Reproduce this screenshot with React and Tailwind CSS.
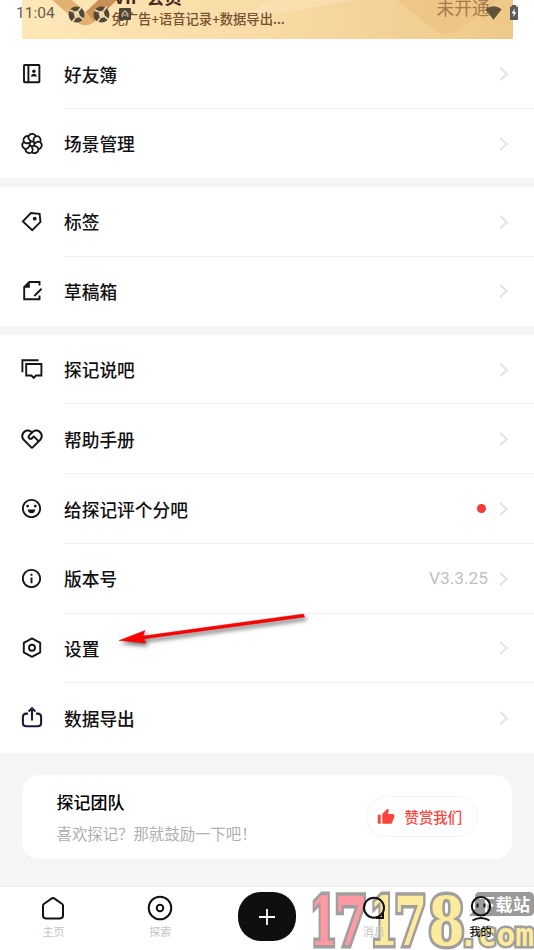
import React from 'react';
import { RiServiceLine, RiEmotionLine, RiInformationLine, RiThumbUpFill } from 'react-icons/ri';

function Icon({ children, color = '#161616' }) {
  return (
    <svg width="24" height="24" viewBox="0 0 24 24" fill="none" stroke={color} strokeWidth="1.9" className="shrink-0">
      {children}
    </svg>
  );
}

const petals = [0, 51.4, 102.9, 154.3, 205.7, 257.1, 308.6];

const icons = {
  book: (
    <Icon>
      <rect x="4" y="3" width="15.4" height="17.2" rx="0.6" />
      <path d="M8.4 3v17" />
      <circle cx="13.9" cy="9.2" r="1.7" fill="#161616" stroke="none" />
      <path d="M11 14.5c0-3.7 5.8-3.7 5.8 0z" fill="#161616" stroke="none" />
    </Icon>
  ),
  flower: (
    <Icon>
      <circle cx="12" cy="11.8" r="2.3" strokeWidth="1.5" />
      {petals.map((deg) => (
        <path
          key={deg}
          d="M12 9.5C9.2 8.5 7.8 6 8.7 3.9C10.2 1 14.8 1.3 15.8 4.6"
          strokeWidth="1.8"
          transform={`rotate(${deg} 12 11.8)`}
        />
      ))}
    </Icon>
  ),
  tag: (
    <Icon>
      <path d="M2.9 11.4 10.9 3 19.6 3.9 20.5 11.8 12.2 20.2z" />
      <circle cx="14.7" cy="8.7" r="1.9" fill="#161616" stroke="none" />
    </Icon>
  ),
  draft: (
    <Icon>
      <path d="M19.5 6.5V3H9.3L4.2 8.2V20.2H19.5V16.6" />
      <path d="M9.8 3V8.8H4.2z" fill="#161616" stroke="none" />
      <path d="M14.3 17 21.6 9.8" />
    </Icon>
  ),
  chat: (
    <Icon>
      <path d="M18.6 2.3H2.4V14.2" />
      <path d="M6.2 6H21.4V17.5H16L13.7 19.9 11.4 17.5H6.2z" />
    </Icon>
  ),
  heart: <RiServiceLine size={24} color="#161616" className="-mt-px shrink-0" />,
  smile: <RiEmotionLine size={23} color="#161616" className="mr-px shrink-0" />,
  info: <RiInformationLine size={23} color="#161616" className="mr-px shrink-0" />,
  settings: (
    <Icon>
      <path d="M12 2.4 20.2 6.9V16.3L12 20.9 3.8 16.3V6.9z" strokeLinejoin="round" />
      <circle cx="12" cy="11.7" r="3" />
    </Icon>
  ),
  share: (
    <Icon color="#25173a">
      <path strokeWidth="2.1" d="M8 7.6H6.2Q2.9 7.6 2.9 10.9V17Q2.9 20.3 6.2 20.3H17.8Q21.1 20.3 21.1 17V10.9Q21.1 7.6 17.8 7.6H16" />
      <path strokeWidth="2.1" d="M12 14.6V3.5M8.6 5.4 12 2.2 15.4 5.4" />
    </Icon>
  ),
};

const groups = [
  [
    { icon: 'book', label: '好友簿' },
    { icon: 'flower', label: '场景管理' },
  ],
  [
    { icon: 'tag', label: '标签' },
    { icon: 'draft', label: '草稿箱' },
  ],
  [
    { icon: 'chat', label: '探记说吧' },
    { icon: 'heart', label: '帮助手册' },
    { icon: 'smile', label: '给探记评个分吧', dot: true },
    { icon: 'info', label: '版本号', value: 'V3.3.25' },
    { icon: 'settings', label: '设置' },
    { icon: 'share', label: '数据导出' },
  ],
];

function Row({ item, last }) {
  return (
    <div className="flex h-[69.7px] items-center pl-5">
      {icons[item.icon]}
      <div className={`ml-5 flex h-full flex-1 items-center border-b pt-px pr-[25px] ${last ? 'border-transparent' : 'border-[#f0f0f0]'}`}>
        <span className="flex-1 text-[17.7px] font-medium text-[#111]">{item.label}</span>
        {item.dot && <span className="mr-[13px] h-[9px] w-[9px] rounded-full bg-[#f53b37]" />}
        {item.value && (
          <span className="mr-[11px] pt-px font-[Roboto] text-[17.3px] text-[#c0c0c0]">{item.value}</span>
        )}
        <svg width="10" height="14" viewBox="0 0 10 14" fill="none" stroke="#e2e2e2" strokeWidth="2">
          <path d="M1.2 1 7.8 7 1.2 13" />
        </svg>
      </div>
    </div>
  );
}

function Pinwheel() {
  return (
    <svg width="17" height="17" viewBox="0 0 17 17">
      <circle cx="8.5" cy="8.5" r="8" fill="#51483a" />
      <path d="M5.2 5.5 10.5 4.5 12.2 11 7 12.5z" fill="#edd6a6" />
      <path d="M5.4 5.7 1.5 4M10.5 5 13.5.8M11.8 10.8 15.5 13.5M7 12.2 4 16.5" fill="none" stroke="#edd6a6" strokeWidth="1.8" />
    </svg>
  );
}

function Header() {
  return (
    <header className="relative h-[39px] overflow-hidden px-[22px]">
      <div className="relative h-full w-[490.5px] overflow-hidden bg-linear-to-r from-[#ffe7b8] via-[#f8dba5] to-[#eec888]">
        <svg width="491" height="39" viewBox="22 0 491 39" fill="none" className="absolute inset-0">
          <path d="M232 22 355 0H270z" fill="#fff0cc" opacity=".3" />
          <path d="M117-9 91 16Q85 21 80 16" stroke="#c98f55" strokeWidth="13" />
          <path d="M53-8 80 16Q85 21 90 16.5" stroke="#e2b170" strokeWidth="13" />
          <path d="M397 0 434 30Q446 38 459 30L497 0z" fill="#ecc384" opacity=".8" />
        </svg>
        <div className="absolute left-[92px] top-[-16px] whitespace-nowrap text-[17.7px] leading-6 font-bold text-[#4c291c]">VIP 会员</div>
        <div className="absolute left-[89.5px] top-[9px] whitespace-nowrap text-[13.3px] leading-5 font-medium text-[#76502f]">免广告+语音记录+数据导出...</div>
        <div className="absolute left-[414.5px] top-[-5px] whitespace-nowrap text-[17.7px] leading-6 text-[#a57a4c]">未开通</div>
      </div>
      {/* system status bar floats over the banner */}
      <div className="absolute inset-x-0 top-0 flex h-7 items-center pl-4">
        <span className="w-[51.5px] font-[Roboto] text-[15.5px] text-[#625c50]">11:04</span>
        <Pinwheel />
        <span className="w-2" />
        <Pinwheel />
        <svg width="12" height="12" viewBox="0 0 12 12" className="ml-[9.5px]">
          <rect width="12" height="12" rx="1" fill="#4d4539" />
          <path d="M3.2 9V6L6 2.8 8.8 6V9M4 7h4" fill="none" stroke="#d8bd8d" strokeWidth="1.2" />
        </svg>
        <svg width="17" height="14" viewBox="0 0 17 14" className="mt-[-3px] ml-auto">
          <path d="M.3 3.2Q8.5-2.8 16.7 3.2L8.5 13.8z" fill="#625239" />
        </svg>
        <svg width="8" height="15" viewBox="0 0 8 15" className="mt-[-3px] mr-4 ml-[8.5px]">
          <path d="M2 0h4v1.5h2V15H0V1.5h2z" fill="#5b5b5b" />
          <path d="M4.8 3.5 1.6 8.2h2L3.2 12 6.4 7.3h-2z" fill="#fff" />
        </svg>
      </div>
    </header>
  );
}

function TabItem({ label, active, children }) {
  return (
    <div className="relative flex flex-1 flex-col items-center pt-2">
      <svg width="28" height="28" viewBox="0 0 28 28" fill="none" stroke="#111" strokeWidth="2">
        {children}
      </svg>
      <span className={`-mt-[1.5px] text-[11px] leading-[18px] ${active ? 'font-medium text-[#111]' : 'text-[#c4c4c4]'}`}>{label}</span>
    </div>
  );
}

const digits = [
  { char: '1', x: 310, width: 27, color: '#ff9aa5' },
  { char: '7', x: 334.5, width: 33, color: '#ff9aa5' },
  { char: '1', x: 369.5, width: 28, color: '#fdeb9c' },
  { char: '7', x: 394, width: 33, color: '#fdeb9c' },
  { char: '8', x: 428.5, width: 36, color: '#fdeb9c' },
];

function Watermark() {
  return (
    <svg width="224" height="63" viewBox="310 887 224 63" className="pointer-events-none absolute right-0 bottom-0">
      <g stroke="#a19f9e" paintOrder="stroke" fontWeight="700">
        <g strokeWidth="7" fontFamily="DejaVu Serif, serif" fontSize="67">
          {digits.map((d, i) => (
            <text key={i} x={d.x} y="945" textLength={d.width} lengthAdjust="spacingAndGlyphs" fill={d.color}>
              {d.char}
            </text>
          ))}
        </g>
        <text x="459" y="946" textLength="75" lengthAdjust="spacingAndGlyphs" fill="#fdeb9c" fontFamily="DejaVu Sans Mono, monospace" fontSize="32" strokeWidth="5">.com</text>
      </g>
      <path d="M478 892H529Q534 892 534 897V911Q534 916 529 916H469L475 909V897Q475 892 480 892z" fill="#9a9a9a" />
      <text x="478" y="911" fontFamily="Noto Sans CJK SC" fontWeight="700" fontSize="17" textLength="52" fill="#fff">下载站</text>
    </svg>
  );
}

function TabBar() {
  return (
    <nav className="relative flex h-16 border-t border-[#eeeeee] bg-white">
      <Watermark />
      <TabItem label="主页">
        <path d="M13.2 3.2Q14 2.7 14.8 3.2L23.2 9Q24 9.6 24 10.6V20.6Q24 23.4 21.2 23.4H6.8Q4 23.4 4 20.6V10.6Q4 9.6 4.8 9z" />
      </TabItem>
      <TabItem label="探索">
        <circle cx="14" cy="13" r="11.3" />
        <circle cx="14" cy="13" r="3.3" />
      </TabItem>
      <div className="flex flex-1 justify-center pt-[5px]">
        <div className="flex h-[49px] w-[58px] items-center justify-center rounded-[23px] bg-[#0f0f0f]">
          <svg width="16" height="16" viewBox="0 0 16 16" stroke="#fff" strokeWidth="1.8">
            <path d="M8 0V16M0 8H16" />
          </svg>
        </div>
      </div>
      <TabItem label="消息">
        <circle cx="14" cy="12.7" r="10" />
        <path d="M16 23H23V18" />
      </TabItem>
      <TabItem label="我的" active>
        <circle cx="14" cy="11.3" r="9.2" />
        <path d="M10.5 8.5V12.5M17.5 8.5V12.5" />
        <path d="M5.5 25.5Q14 20.5 22.5 25.5" />
      </TabItem>
    </nav>
  );
}

export default function App() {
  return (
    <div className="relative flex h-[950px] w-[534px] flex-col overflow-hidden bg-[#f5f5f5] font-['Noto_Sans_CJK_SC',sans-serif]">
      <div className="bg-white">
        <Header />
      </div>
      <main className="flex flex-1 flex-col">
        <div className="flex flex-col gap-[8.5px]">
          {groups.map((group, i) => (
            <section key={i} className="bg-white">
              {group.map((item, j) => (
                <Row key={item.label} item={item} last={j === group.length - 1} />
              ))}
            </section>
          ))}
        </div>
        <div className="mx-[22px] mt-[22px] flex h-[84px] items-center rounded-[17px] bg-white pr-[34px] pl-[34.5px]">
          <div className="flex-1 pt-[2px]">
            <div className="text-[17px] leading-[30px] font-medium text-black">探记团队</div>
            <div className="mt-px text-[15.4px] leading-[30px] text-[#b0b0b0]">喜欢探记？那就鼓励一下吧！</div>
          </div>
          <button className="flex h-[41px] w-[112px] items-center rounded-full border border-[#f4f4f4] pl-[10px] text-[14.4px] font-medium text-[#fc453e]">
            <RiThumbUpFill size={18} className="mr-[9.5px]" />
            赞赏我们
          </button>
        </div>
      </main>
      <TabBar />
      {/* pointer to the settings row */}
      <svg width="200" height="45" viewBox="115 608 200 45" className="pointer-events-none absolute top-[608px] left-[115px] drop-shadow-[2px_3px_2px_rgba(0,0,0,0.55)]">
        <path d="M119 640.5 145 630.5 143 636 303.5 614 304.5 617 143.5 639 146 643z" fill="#f00" stroke="#c00" strokeWidth=".4" />
      </svg>
    </div>
  );
}
